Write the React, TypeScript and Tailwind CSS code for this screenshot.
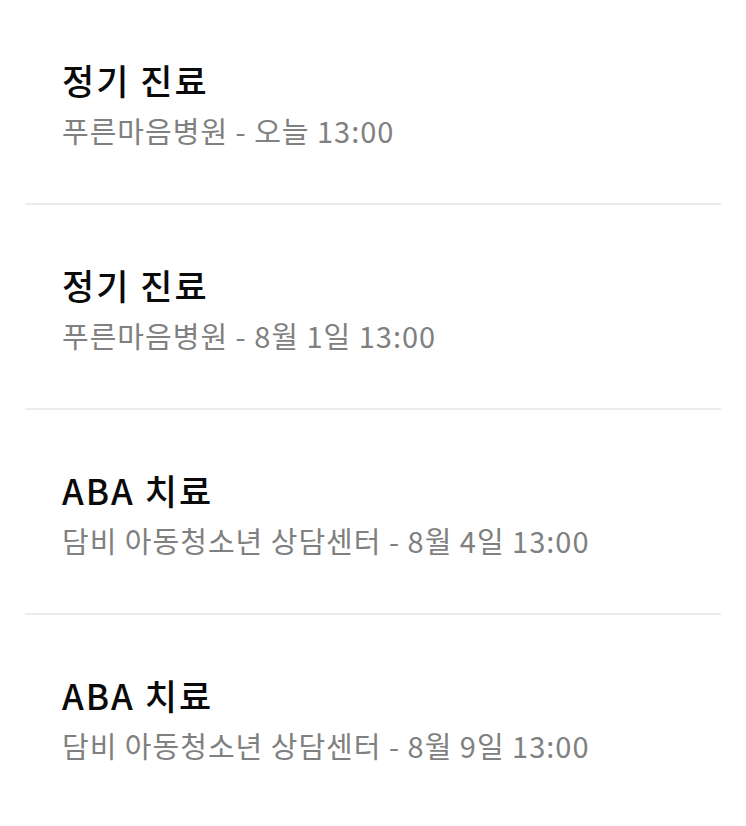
const appointments = [
  { title: '정기 진료', place: '푸른마음병원', when: '오늘 13:00' },
  { title: '정기 진료', place: '푸른마음병원', when: '8월 1일 13:00' },
  { title: 'ABA 치료', place: '담비 아동청소년 상담센터', when: '8월 4일 13:00' },
  { title: 'ABA 치료', place: '담비 아동청소년 상담센터', when: '8월 9일 13:00' },
]

const App = () => {
  return (
    <div
      className="min-h-[826px] w-full bg-white px-[25px]"
      style={{ fontFamily: '"Noto Sans CJK KR", "Noto Sans", sans-serif' }}
    >
      {appointments.map((item, index) => (
        <div
          key={index}
          className={`pl-[37px] pt-[58px] pb-[55px] ${index < appointments.length - 1 ? 'border-b-2 border-[#ececec]' : ''}`}
        >
          <div className="text-[35px] leading-[44px] font-medium tracking-[2px] text-[#0a0a0a]">{item.title}</div>
          <div className="mt-[10px] text-[29px] leading-[36px] tracking-[1px] text-[#808080]">
            {item.place} - {item.when}
          </div>
        </div>
      ))}
    </div>
  )
}

export default App
